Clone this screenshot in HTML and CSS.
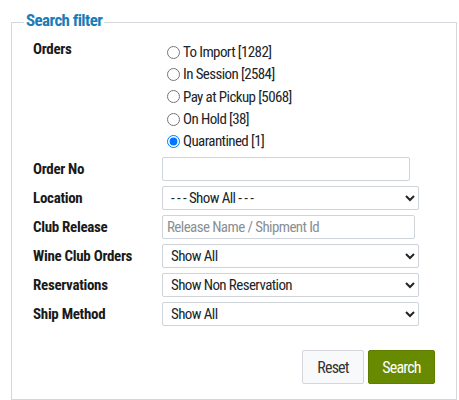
FILE: index.html
```html
<!DOCTYPE html>
<html>
<head>
<meta charset="utf-8">
<link rel="stylesheet" href="styles.css">
</head>
<body>
<form class="page">
  <fieldset class="filter">
    <legend class="legend">Search filter</legend>
    <div class="grid">
      <div class="label label-top">Orders</div>
      <div class="radios">
        <label class="radio"><input type="radio" name="o"> To Import [1282]</label>
        <label class="radio"><input type="radio" name="o"> In Session [2584]</label>
        <label class="radio"><input type="radio" name="o"> Pay at Pickup [5068]</label>
        <label class="radio"><input type="radio" name="o"> On Hold [38]</label>
        <label class="radio"><input type="radio" name="o" checked> Quarantined [1]</label>
      </div>

      <div class="label">Order No</div>
      <div class="ctl"><input class="field w-order" type="text"></div>

      <div class="label">Location</div>
      <div class="ctl"><select class="field w-select"><option>- - - Show All - - -</option></select></div>

      <div class="label">Club Release</div>
      <div class="ctl"><input class="field w-club" type="text" placeholder="Release Name / Shipment Id"></div>

      <div class="label">Wine Club Orders</div>
      <div class="ctl"><select class="field w-select"><option>Show All</option></select></div>

      <div class="label">Reservations</div>
      <div class="ctl"><select class="field w-select"><option>Show Non Reservation</option></select></div>

      <div class="label">Ship Method</div>
      <div class="ctl"><select class="field w-select"><option>Show All</option></select></div>
    </div>
    <div class="actions">
      <button type="button" class="btn btn-reset">Reset</button>
      <button type="button" class="btn btn-search">Search</button>
    </div>
  </fieldset>
</form>
</body>
</html>
```

FILE: styles.css
```css
html, body {
  margin: 0;
  padding: 0;
  background: #fff;
}
body {
  font-family: "Roboto Condensed", Roboto, sans-serif;
  font-stretch: 75%;
  font-size: 15px;
  letter-spacing: -0.6px;
  color: #212529;
}
.page {
  padding: 10px 2px 0 11px;
}
.filter {
  margin: 0;
  border: 1px solid #d3d6da;
  padding: 0 0 14px 0;
  height: 390px;
  box-sizing: border-box;
}
.legend {
  color: #1b7db8;
  font-weight: 700;
  font-size: 17px;
  letter-spacing: -0.6px;
  padding: 0 2px 5px;
  margin-left: 12px;
}
.grid {
  display: grid;
  grid-template-columns: 129px 1fr;
  row-gap: 5px;
  align-items: center;
  margin-top: 6px;
  padding-left: 21px;
}
.label {
  font-weight: 700;
  font-size: 15px;
  letter-spacing: -0.3px;
  color: #1a1a1a;
}
.label-top {
  align-self: start;
  margin-top: -1px;
}
.radios {
  display: flex;
  flex-direction: column;
}
.radio {
  display: flex;
  align-items: center;
  height: 22.3px;
  font-size: 15px;
}
.radio input {
  margin: 0 3px 0 5px;
}
.ctl {
  display: flex;
}
.field {
  box-sizing: border-box;
  height: 24px;
  border: 1px solid #ced4da;
  border-radius: 2px;
  font-family: inherit;
  font-stretch: 75%;
  letter-spacing: -0.6px;
  font-size: 15px;
  color: #212529;
  background: #fff;
  padding: 0 4px;
  margin: 0;
}
.field::placeholder {
  color: #8a8f94;
}
.w-order { width: 248px; }
.w-club { width: 253px; }
.w-select { width: 257px; }
.actions {
  display: flex;
  justify-content: flex-end;
  gap: 4px;
  margin-top: 24px;
  padding-right: 21px;
}
.btn {
  height: 34px;
  font-family: inherit;
  font-stretch: 75%;
  letter-spacing: -0.8px;
  font-size: 16px;
  border-radius: 2px;
  cursor: pointer;
}
.btn-reset {
  width: 62px;
  background: #f8f9fa;
  border: 1px solid #d3d6da;
  color: #333;
}
.btn-search {
  width: 67px;
  background: #688a00;
  border: 1px solid #5f7f00;
  color: #fff;
}
```
